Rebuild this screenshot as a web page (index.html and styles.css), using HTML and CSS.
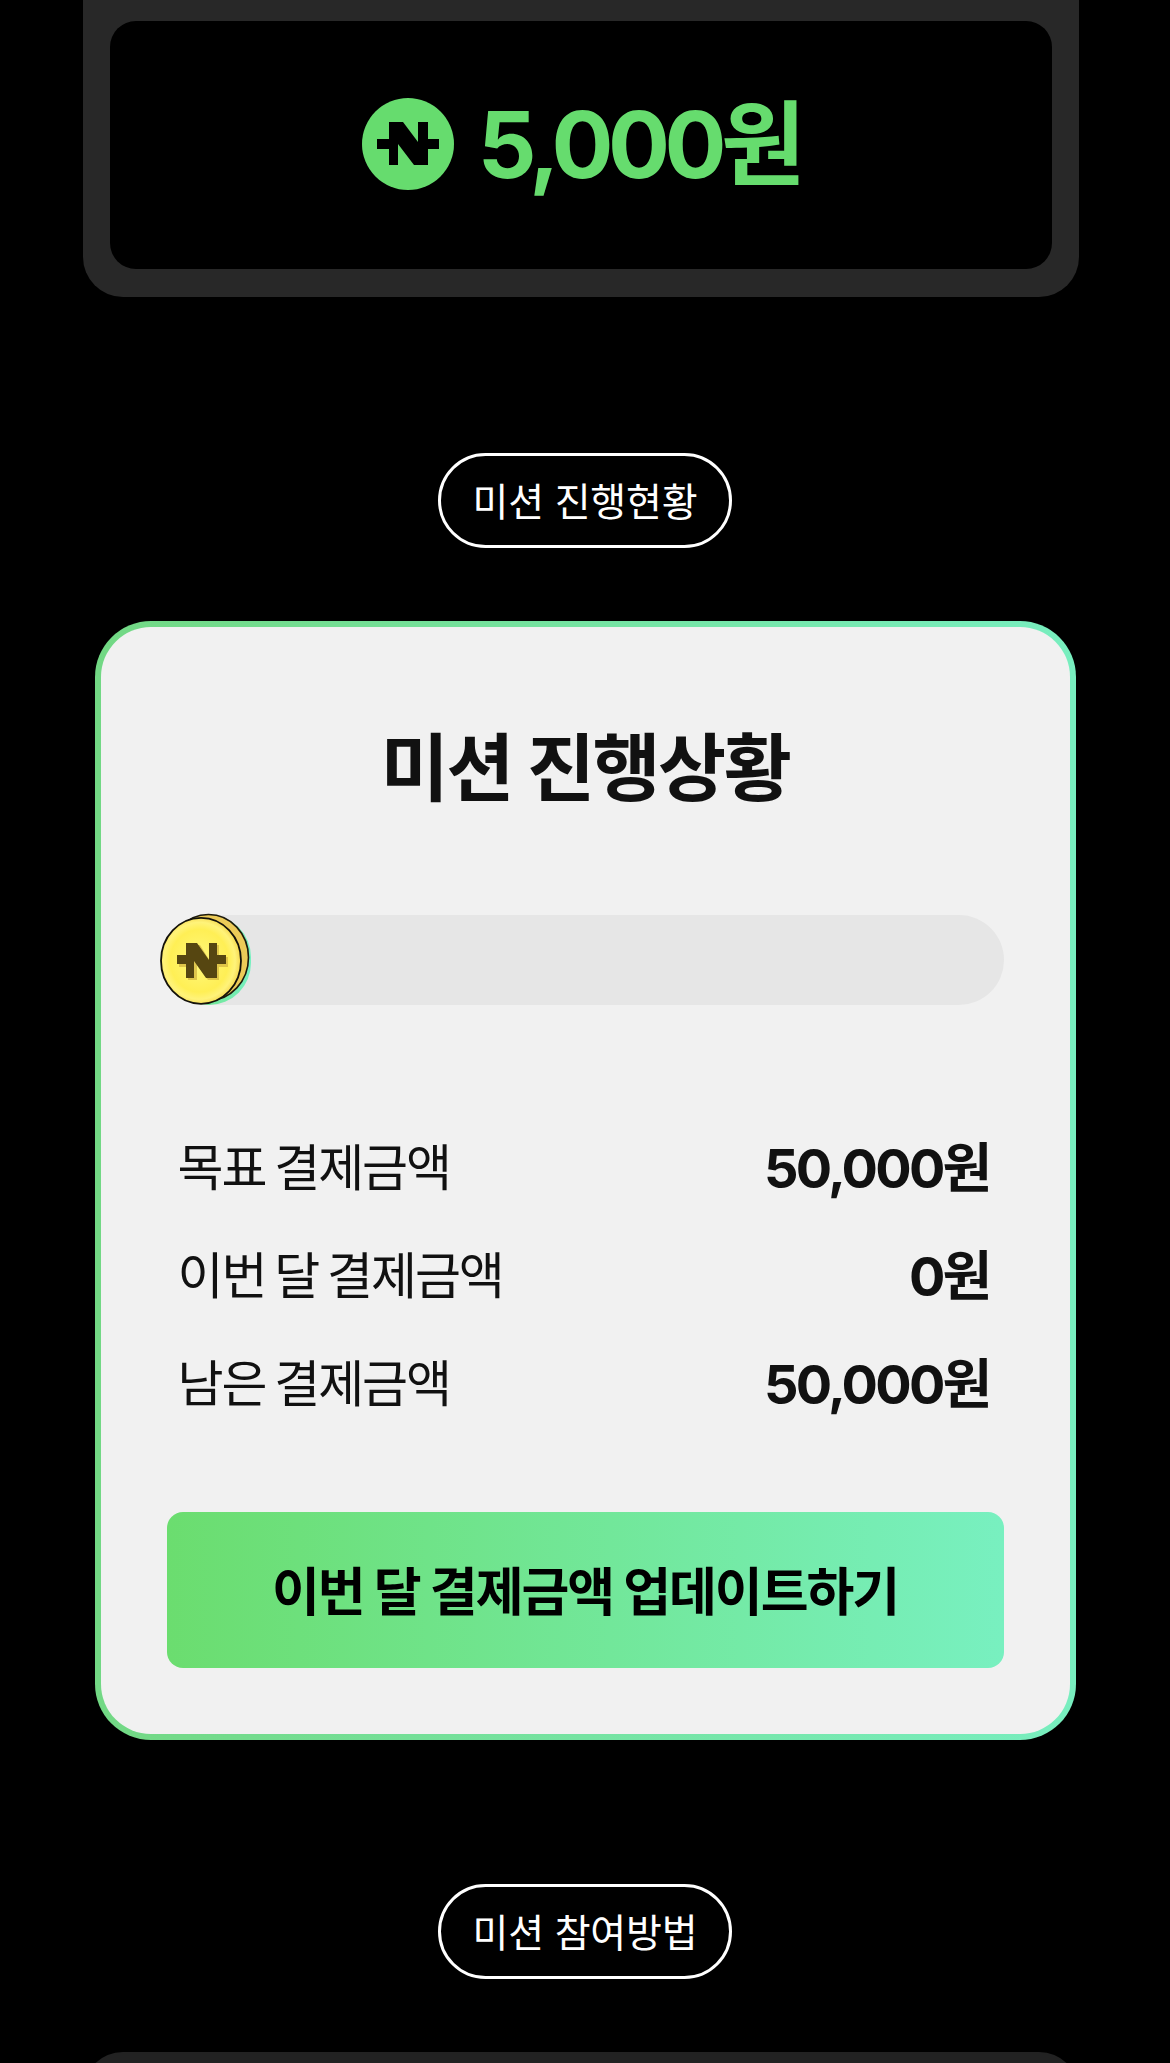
FILE: index.html
```html
<!DOCTYPE html>
<html lang="ko">
<head>
    <meta charset="UTF-8">
    <meta name="viewport" content="width=device-width, initial-scale=1.0">
    <title>미션 진행상황</title>
    <link rel="stylesheet" href="styles.css">
</head>
<body>
    <div class="page">
        <!-- Reward Card -->
        <div class="reward-card">
            <div class="reward-inner">
                <svg class="reward-icon" viewBox="0 0 92 92" aria-hidden="true">
                    <circle cx="46" cy="46" r="46" fill="#66dc6e"/>
                    <path d="M27 24H41L56 44V24H66V41H77V51H66V67H52L36 46V67H27V51H15V41H27Z" fill="#000"/>
                </svg>
                <span class="reward-amount">5,000원</span>
            </div>
        </div>

        <div class="pill">미션 진행현황</div>

        <!-- Mission Progress -->
        <div class="mission-card">
            <h2 class="mission-title">미션 진행상황</h2>

            <div class="progress-track">
                <div class="progress-fill"></div>
                <svg class="progress-coin" viewBox="0 0 90 92" aria-hidden="true">
                    <defs>
                        <radialGradient id="coin-face" cx="48%" cy="50%" r="52%">
                            <stop offset="0" stop-color="#fff87e"/>
                            <stop offset="0.7" stop-color="#ffef55"/>
                            <stop offset="0.86" stop-color="#fff37a"/>
                            <stop offset="1" stop-color="#f5d84e"/>
                        </radialGradient>
                    </defs>
                    <ellipse cx="48.5" cy="44.5" rx="40" ry="43" fill="#eccb58" stroke="#1d1a0c" stroke-width="1.6"/>
                    <ellipse cx="41" cy="47.8" rx="40" ry="43" fill="url(#coin-face)" stroke="#14120a" stroke-width="1.8"/>
                    <path d="M28 32H40L50 48V32H59V44H68V54H59V67H48L37 51V67H28V54H19V44H28Z" fill="#d2b23e" opacity="0.7"/>
                    <path d="M26 30H37L49 47V30H57V42H66V51H57V65H46L34 48V65H26V51H17V42H26Z" fill="#564611"/>
                </svg>
            </div>

            <div class="summary">
                <div class="summary-row">
                    <span class="summary-label">목표 결제금액</span>
                    <span class="summary-value">50,000원</span>
                </div>
                <div class="summary-row">
                    <span class="summary-label">이번 달 결제금액</span>
                    <span class="summary-value">0원</span>
                </div>
                <div class="summary-row">
                    <span class="summary-label">남은 결제금액</span>
                    <span class="summary-value">50,000원</span>
                </div>
            </div>

            <button class="update-button">이번 달 결제금액 업데이트하기</button>
        </div>

        <div class="pill pill-second">미션 참여방법</div>

        <!-- How To Card (cut off by the window) -->
        <div class="howto-card"></div>
    </div>
</body>
</html>
```

FILE: styles.css
```css
/* Page */
html, body {
    margin: 0;
    padding: 0;
    background: #000;
}

body {
    font-family: Inter, 'Noto Sans CJK KR', sans-serif;
}

.page {
    height: 2063px;
    overflow: hidden;
    display: flex;
    flex-direction: column;
    align-items: center;
}

/* Reward Card */
.reward-card {
    flex: none;
    box-sizing: border-box;
    width: 996px;
    height: 357px;
    margin: -60px 0 0 -8px;
    padding: 81px 27px 28px;
    background: #282828;
    border-radius: 40px;
}

.reward-inner {
    height: 248px;
    background: #000;
    border-radius: 26px;
    display: flex;
    align-items: center;
    justify-content: center;
    gap: 24px;
}

.reward-icon {
    width: 92px;
    height: 92px;
    flex: none;
    margin-top: -2px;
}

.reward-amount {
    font-size: 92px;
    font-weight: 700;
    letter-spacing: -5.5px;
    line-height: 1;
    color: #66dc6e;
}

/* Pills */
.pill {
    flex: none;
    box-sizing: border-box;
    width: 294px;
    height: 95px;
    margin-top: 156px;
    border: 3px solid #fff;
    border-radius: 48px;
    display: flex;
    align-items: center;
    justify-content: center;
    font-size: 39px;
    font-weight: 400;
    letter-spacing: -0.2px;
    padding-bottom: 3px;
    color: #fff;
}

.pill-second {
    margin-top: 144px;
}

/* Mission Card */
.mission-card {
    flex: none;
    box-sizing: border-box;
    width: 981px;
    height: 1119px;
    margin-top: 73px;
    padding: 91px 66px 66px;
    border: 6px solid transparent;
    border-radius: 56px;
    background: linear-gradient(#f1f1f1, #f1f1f1) padding-box,
                linear-gradient(90deg, #72d884, #78eebf) border-box;
}

.mission-title {
    margin: 0;
    font-size: 74px;
    font-weight: 700;
    line-height: 100px;
    letter-spacing: -2.5px;
    text-align: center;
    color: #111;
}

/* Progress */
.progress-track {
    position: relative;
    height: 90px;
    margin-top: 97px;
    background: #e6e6e6;
    border-radius: 45px;
}

.progress-fill {
    width: 84px;
    height: 90px;
    background: linear-gradient(90deg, #6bdd6f, #78f0c0);
    border-radius: 45px;
}

.progress-coin {
    position: absolute;
    left: -7px;
    top: -2px;
    width: 90px;
    height: 92px;
}

/* Summary Rows */
.summary {
    margin-top: 105px;
    padding: 0 14px 0 11px;
}

.summary-row {
    height: 108px;
    display: flex;
    align-items: center;
    justify-content: space-between;
}

.summary-label {
    font-size: 50px;
    font-weight: 400;
    letter-spacing: -2.1px;
    word-spacing: -3px;
    color: #111;
}

.summary-value {
    font-size: 54px;
    font-weight: 700;
    letter-spacing: -2.75px;
    color: #111;
}

/* Update Button */
.update-button {
    display: block;
    width: 100%;
    height: 156px;
    margin-top: 78px;
    padding: 0 0 4px;
    border: none;
    border-radius: 16px;
    background: linear-gradient(90deg, #6bdd6f, #78f0c0);
    font-family: inherit;
    font-size: 52px;
    font-weight: 700;
    letter-spacing: -2.05px;
    color: #000;
}

/* How To Card */
.howto-card {
    flex: none;
    width: 996px;
    height: 100px;
    margin: 73px 0 0 -8px;
    background: #222;
    border-radius: 40px;
}
```
